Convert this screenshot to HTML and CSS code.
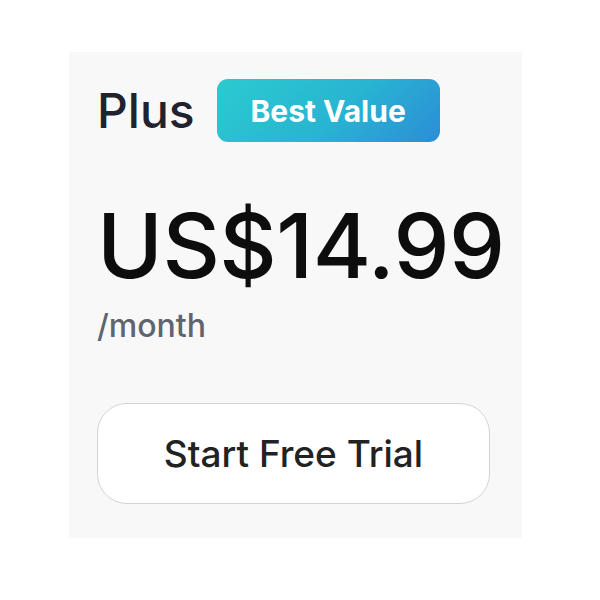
FILE: index.html
```html
<!DOCTYPE html>
<html>
<head>
<meta charset="utf-8">
<link rel="stylesheet" href="styles.css">
</head>
<body>
<div class="card">
  <div class="head">
    <span class="plan">Plus</span>
    <span class="badge">Best Value</span>
  </div>
  <div class="price">US$14.99</div>
  <div class="period">/month</div>
  <button class="cta">Start Free Trial</button>
</div>
</body>
</html>
```
FILE: styles.css
```css
html, body { margin: 0; padding: 0; background: #ffffff; }
body { font-family: Inter, "Noto Sans", sans-serif; }
.card {
  margin: 52px 0 0 69px;
  width: 453px;
  height: 486px;
  box-sizing: border-box;
  background: #f8f8f8;
  padding: 27px 32px 34px 28px;
  display: flex;
  flex-direction: column;
}
.head { display: flex; align-items: center; gap: 22px; height: 63px; }
.plan { font-size: 48px; color: #22222e; line-height: 1; font-weight: 450; }
.badge {
  width: 223px; height: 63px; box-sizing: border-box;
  border-radius: 11px;
  background: linear-gradient(135deg, #2bcbcf 0%, #28b4d2 55%, #2b8dd6 100%);
  color: #fff; font-weight: 700; font-size: 30px;
  display: flex; align-items: center; justify-content: center;
}
.price { margin-top: 59px; font-size: 89px; line-height: 1; color: #0d0d0d; font-weight: 550; letter-spacing: -0.5px; }
.period { margin-top: 20px; font-size: 32px; line-height: 1; color: #5f6471; font-weight: 450; }
.cta {
  margin-top: 61px;
  width: 393px; height: 101px;
  background: #fff; border: 1.5px solid #d4d4d8; border-radius: 30px;
  font-family: Inter, sans-serif; font-size: 37px; color: #222; font-weight: 500;
}
```
